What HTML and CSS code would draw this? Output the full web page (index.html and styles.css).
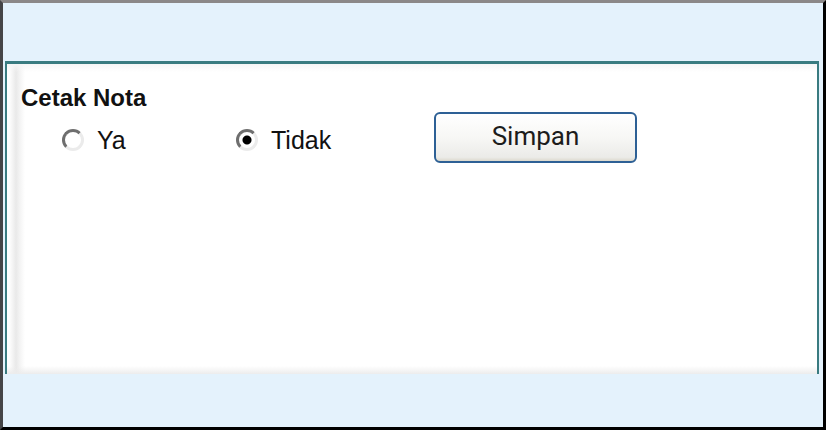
FILE: index.html
```html
<!DOCTYPE html>
<html lang="id">
<head>
<meta charset="utf-8">
<meta name="viewport" content="width=device-width, initial-scale=1">
<title>Cetak Nota</title>
<link rel="stylesheet" href="styles.css">
</head>
<body>
<main class="frame">
  <form class="panel">
    <fieldset class="group">
      <legend class="title">Cetak Nota</legend>
      <div class="row">
        <label class="option"><input class="radio" type="radio" name="cetak" value="ya">Ya</label>
        <label class="option"><input class="radio" type="radio" name="cetak" value="tidak" checked>Tidak</label>
        <button class="save" type="button">Simpan</button>
      </div>
    </fieldset>
  </form>
</main>
</body>
</html>
```
FILE: styles.css
```css
* {
  box-sizing: border-box;
}

body {
  margin: 0;
  color: #111;
  font: 25px/28px "Liberation Sans", Arial, sans-serif;
}

.frame {
  display: flex;
  min-height: 100vh;
  padding: 58px 4px 53px 2px;
  border: 3px solid #000;
  border-top-color: #8b8888;
  border-left-color: #454547;
  background: #e4f2fc;
}

.panel {
  flex: 1;
  padding: 20px 14px;
  border: 3px solid #397b80;
  border-right-width: 2px;
  border-left-width: 2px;
  border-bottom: 0;
  background:
    linear-gradient(to top, #ececec, transparent 8px),
    linear-gradient(to bottom, #f5f5f5, transparent 8px),
    linear-gradient(to right, #fff 2px, #e9e9e9 9px, #f4f4f4 13px, #fff 18px);
}

.group {
  margin: 0;
  padding: 0;
  border: 0;
}

.title {
  padding: 0;
  font-size: 24px;
  font-weight: bold;
}

.row {
  display: grid;
  grid-template-columns: 174px 198px 203px;
  align-items: center;
  padding-left: 41px;
}

.option {
  display: flex;
  align-items: center;
  gap: 13px;
  padding-top: 4px;
}

.radio {
  appearance: none;
  width: 22px;
  height: 22px;
  margin: 0;
  border: 3px solid #ebebeb;
  border-top-color: #6e6e6e;
  border-left-color: #6e6e6e;
  border-radius: 50%;
  background: #fff;
}

.radio:checked {
  background: radial-gradient(circle, #000 4px, #fff 5px);
}

.save {
  height: 51px;
  padding: 0 0 4px;
  border: 2px solid #2d6095;
  border-radius: 6px;
  background: linear-gradient(#fff, #f7f7f5 50%, #ebebe8 92%, #dcd9cd);
  color: #1c1c1c;
  font: 26px/30px Roboto, sans-serif;
}
```
